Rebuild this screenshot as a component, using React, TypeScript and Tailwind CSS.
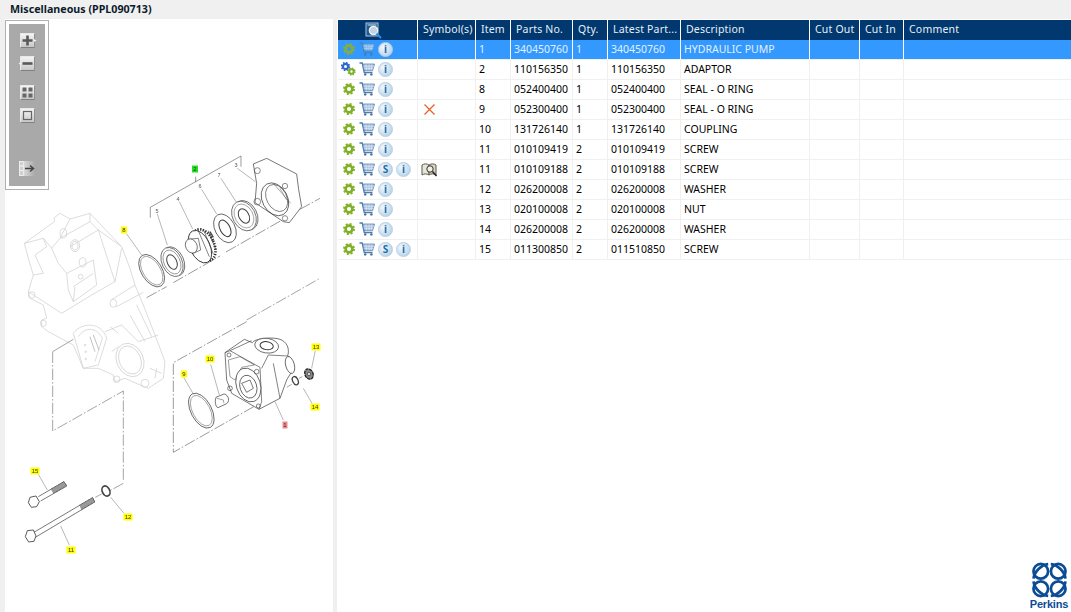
import type { ReactNode } from "react";

const font = { fontFamily: '"Noto Sans", "Liberation Sans", sans-serif' };

type Part = {
  item: string;
  partNo: string;
  qty: string;
  latest: string;
  description: string;
  extra?: boolean;
  symbol?: "x" | "book";
  gears?: boolean;
};

const parts: Part[] = [
  { item: "1", partNo: "340450760", qty: "1", latest: "340450760", description: "HYDRAULIC PUMP" },
  { item: "2", partNo: "110156350", qty: "1", latest: "110156350", description: "ADAPTOR", gears: true },
  { item: "8", partNo: "052400400", qty: "1", latest: "052400400", description: "SEAL - O RING" },
  { item: "9", partNo: "052300400", qty: "1", latest: "052300400", description: "SEAL - O RING", symbol: "x" },
  { item: "10", partNo: "131726140", qty: "1", latest: "131726140", description: "COUPLING" },
  { item: "11", partNo: "010109419", qty: "2", latest: "010109419", description: "SCREW" },
  { item: "11", partNo: "010109188", qty: "2", latest: "010109188", description: "SCREW", extra: true, symbol: "book" },
  { item: "12", partNo: "026200008", qty: "2", latest: "026200008", description: "WASHER" },
  { item: "13", partNo: "020100008", qty: "2", latest: "020100008", description: "NUT" },
  { item: "14", partNo: "026200008", qty: "2", latest: "026200008", description: "WASHER" },
  { item: "15", partNo: "011300850", qty: "2", latest: "011510850", description: "SCREW", extra: true },
];

const gridCols = "grid grid-cols-[80px_58px_35px_62px_35px_73px_129px_50px_44px_1fr]";

function Gear({ color = "#7fb026", size = 12 }: { color?: string; size?: number }) {
  return (
    <svg width={size} height={size} viewBox="0 0 12 12">
      <circle cx="6" cy="6" r="3.4" fill="none" stroke={color} strokeWidth="2.6" />
      <circle cx="6" cy="6" r="5" fill="none" stroke={color} strokeWidth="2" strokeDasharray="2 1.93" />
    </svg>
  );
}

function GearPair() {
  return (
    <svg width="15" height="14" viewBox="0 0 15 14">
      <circle cx="4.5" cy="4.5" r="2.6" fill="none" stroke="#2f66d0" strokeWidth="2.2" />
      <circle cx="4.5" cy="4.5" r="3.9" fill="none" stroke="#2f66d0" strokeWidth="1.6" strokeDasharray="1.6 1.46" />
      <circle cx="10.5" cy="9.5" r="2.2" fill="none" stroke="#7fb026" strokeWidth="2" />
      <circle cx="10.5" cy="9.5" r="3.4" fill="none" stroke="#7fb026" strokeWidth="1.5" strokeDasharray="1.4 1.27" />
    </svg>
  );
}

function Cart({ dim }: { dim?: boolean }) {
  return (
    <svg width="16" height="14" viewBox="0 0 16 14" className={dim ? "opacity-70" : ""}>
      <path d="M0.5 1H3.2L5.2 10.5H13.5" fill="none" stroke="#4f7cab" strokeWidth="1.3" />
      <path d="M3.8 2H15.5L13.6 8.6H5.2Z" fill="#a5bfdb" stroke="#5b86b3" strokeWidth="0.8" />
      <path d="M7 2.2L7.5 8.5M10 2.2V8.5M13 2.2L12.2 8.5M4.3 4.2H15M4.8 6.4H14.3" stroke="#e6eef6" strokeWidth="0.6" />
      <circle cx="6.2" cy="12.4" r="1.2" fill="#3d6c9e" />
      <circle cx="12.4" cy="12.4" r="1.2" fill="#3d6c9e" />
    </svg>
  );
}

function Badge({ children }: { children: ReactNode }) {
  return (
    <div className="flex h-[15px] w-[15px] items-center justify-center rounded-full border border-[#b5cfe3] bg-[radial-gradient(circle_at_35%_35%,#f3f8fc,#a9c9e2)] text-[10px] leading-none font-bold text-[#1f6ea8]">
      {children}
    </div>
  );
}

function RowIcons({ part, selected }: { part: Part; selected: boolean }) {
  return (
    <div className="flex h-full items-center pb-[1px]">
      <div className="flex w-[21px] justify-center">
        {part.gears ? <GearPair /> : <Gear color={selected ? "#86ad3c" : "#7fb026"} />}
      </div>
      <Cart dim={selected} />
      <div className="ml-[3px] flex gap-[3px]">
        {part.extra && <Badge>S</Badge>}
        <Badge>i</Badge>
      </div>
    </div>
  );
}

function HeaderIcon() {
  return (
    <svg width="17" height="17" viewBox="0 0 17 17">
      <rect x="1" y="1" width="12" height="13" fill="#1d5a94" stroke="#a9c6e0" />
      <path d="M2.5 3H11.5" stroke="#d6e4f0" />
      <circle cx="8.5" cy="8.5" r="4.2" fill="#c4d3df" stroke="#eef2f6" strokeWidth="1.2" />
      <path d="M11.5 11.5L16 16" stroke="#2f8fe0" strokeWidth="1.9" />
    </svg>
  );
}

function BookIcon() {
  return (
    <svg width="17" height="15" viewBox="0 0 17 15">
      <path d="M1 3C3 1.5 6 1.5 8 3V13C6 11.5 3 11.5 1 13Z" fill="#e8e6d6" stroke="#5a5a4a" />
      <path d="M8 3C10 1.5 13 1.5 15 3V13C13 11.5 10 11.5 8 13Z" fill="#d8d5c0" stroke="#5a5a4a" />
      <circle cx="9" cy="7" r="3.2" fill="#efefe6" stroke="#333" />
      <path d="M11.5 9.5L15.5 14" stroke="#222" strokeWidth="1.5" />
    </svg>
  );
}

function RedX() {
  return (
    <svg width="11" height="11" viewBox="0 0 11 11">
      <path d="M0.5 0.5L10.5 10.5M10.5 0.5L0.5 10.5" stroke="#e8622c" strokeWidth="1.3" />
    </svg>
  );
}

function ToolButton({ children }: { children: ReactNode }) {
  return (
    <div className="h-[15px] w-[15px] rounded-[1px] border border-t-[#e8e8e8] border-l-[#e8e8e8] border-r-[#909090] border-b-[#808080] bg-gradient-to-b from-[#f4f4f4] to-[#c8c8c8]">
      {children}
    </div>
  );
}

function Toolbar() {
  return (
    <div className="absolute top-[1px] left-0 h-[170px] w-[44px] border border-[#b0b0b0] bg-white p-[3px]">
      <div className="flex h-full w-full flex-col items-center bg-[#a9a9a9] pt-[9px]">
        <ToolButton>
          <svg viewBox="0 0 13 13" className="h-full w-full overflow-visible">
            <path d="M6.5 1.5V11.5M1.5 6.5H11.5" stroke="#595959" strokeWidth="2.6" />
            <path d="M13 5L15.5 6.5L13 8Z" fill="#f0f0f0" />
          </svg>
        </ToolButton>
        <div className="mt-[8px]">
          <ToolButton>
            <svg viewBox="0 0 13 13" className="h-full w-full overflow-visible">
              <path d="M1.5 6.5H11.5" stroke="#595959" strokeWidth="2.6" />
              <path d="M0 5L-2.5 6.5L0 8Z" fill="#f0f0f0" />
            </svg>
          </ToolButton>
        </div>
        <div className="mt-[14px]">
          <ToolButton>
            <svg viewBox="0 0 13 13" className="h-full w-full">
              <path d="M1.5 1.5h4v4h-4zM7.5 1.5h4v4h-4zM1.5 7.5h4v4h-4zM7.5 7.5h4v4h-4z" fill="#666" />
            </svg>
          </ToolButton>
        </div>
        <div className="mt-[8px]">
          <ToolButton>
            <svg viewBox="0 0 13 13" className="h-full w-full">
              <rect x="2.5" y="2.5" width="8" height="8" fill="none" stroke="#666" strokeWidth="1.2" />
            </svg>
          </ToolButton>
        </div>
        <div className="mt-[38px]">
          <div className="h-[15px] w-[16px] bg-gradient-to-r from-[#eeeeee] to-[#a9a9a9]">
            <svg viewBox="0 0 16 15" className="h-full w-full">
              <path d="M0.5 0.5h4v4.5h-4zM0.5 5h4v4.5h-4zM0.5 9.5h4v5h-4z" fill="#d0d0d0" stroke="#f4f4f4" strokeWidth="0.7" />
              <path d="M6 7.5H14M11 4.5L14.5 7.5L11 10.5" fill="none" stroke="#444" strokeWidth="1.5" />
            </svg>
          </div>
        </div>
      </div>
    </div>
  );
}

function Tag({ x, y, text, fill = "#ffff00", w = 9 }: { x: number; y: number; text: string; fill?: string; w?: number }) {
  return (
    <g>
      <rect x={x - w / 2} y={y - 3.5} width={w} height={7} fill={fill} />
      <text x={x} y={y + 2} textAnchor="middle" fontSize="6" fill="#333" fontFamily="Liberation Sans, sans-serif">
        {text}
      </text>
    </g>
  );
}

function Plain({ x, y, text }: { x: number; y: number; text: string }) {
  return (
    <text x={x} y={y + 2} textAnchor="middle" fontSize="5.5" fill="#555" fontFamily="Liberation Sans, sans-serif">
      {text}
    </text>
  );
}

function Diagram() {
  const gearbox = "translate(15 205) scale(0.3333)";
  const scale3 = "translate(20 150) scale(0.3333)";
  const scale4 = "translate(20 320) scale(0.3333)";
  const gearZone = "translate(130 200) scale(0.3333)";
  const pumpZone = "translate(215 330) scale(0.3333)";
  return (
    <svg viewBox="5 19 328 593" width="328" height="593" className="block blur-[0.3px]">
      {/* faded gearbox housing */}
      <g transform={gearbox} fill="none" stroke="#cfcfcf" strokeWidth="2.2">
        <path d="M28 115L118 50L118 38L135 25L165 42L225 25L320 125L345 190L360 240L385 300L420 390L450 470L445 520L400 550L375 540L330 520L300 530L295 510L250 490L205 490L175 420L100 380L80 365L80 345L95 340L85 300L45 280L40 260L55 210L40 160Z" />
        <path d="M40 260L140 325L230 270L300 230L320 130M28 115L85 100L110 130L135 100L165 42M85 100L95 125L60 150L85 205L55 210M110 130L130 175L155 205" />
        <path d="M155 205L235 165L245 240L175 290L160 255ZM175 245L235 205M175 290L180 245" />
        <path d="M135 100L225 50L250 75L165 125M225 25L225 50M250 75L320 125M250 75L290 200L300 230" />
        <circle cx="197" cy="215" r="7" />
        <ellipse cx="180" cy="122" rx="14" ry="18" />
        <ellipse cx="180" cy="122" rx="9" ry="13" />
        <ellipse cx="203" cy="172" rx="10" ry="14" />
        <ellipse cx="145" cy="85" rx="10" ry="14" />
        <ellipse cx="295" cy="295" rx="10" ry="12" />
        <path d="M290 284L360 240M303 306L385 262M320 360L370 410L430 390M345 330L390 410M365 300L410 395" />
        <path d="M175 385C200 350 260 350 275 400L250 480L205 490ZM190 395C210 365 245 365 262 400L240 470" />
        <path d="M225 395L240 440M235 390L252 435" stroke="#aaaaaa" />
        <circle cx="210" cy="420" r="2.5" />
        <circle cx="212" cy="440" r="2.5" />
        <circle cx="212" cy="462" r="2.5" />
        <ellipse cx="345" cy="465" rx="40" ry="52" transform="rotate(-25 345 465)" />
        <ellipse cx="345" cy="465" rx="32" ry="44" transform="rotate(-25 345 465)" />
        <path d="M290 440L310 425M270 380L320 360M285 365L310 385" />
        <circle cx="305" cy="523" r="10" />
        <circle cx="390" cy="535" r="12" />
        <circle cx="85" cy="355" r="9" />
        <circle cx="50" cy="270" r="10" />
        <path d="M405 490L440 505M420 520L425 490" />
      </g>

      <g transform={scale3} fill="none" stroke="#555" strokeWidth="2">
        <path d="M391 203V172L663 18V50M527 80V97" stroke="#666" />
        <path d="M380 443L440 410M460 398L600 318M618 306L790 208M840 178L900 145" stroke="#666" strokeDasharray="34 6 5 6" />
        <path d="M680 510L900 385" stroke="#777" strokeDasharray="34 6 5 6" />
        {/* leaders */}
        <path d="M320 252L365 315M412 192L442 285M478 155L518 237M545 118L590 192M603 85L650 158M652 55L706 95" stroke="#777" strokeWidth="1.6" />
        {/* ring 8 */}
        <ellipse cx="395" cy="362" rx="31" ry="54" transform="rotate(-32 395 362)" stroke="#333" strokeWidth="2" />
        <ellipse cx="395" cy="362" rx="26" ry="48" transform="rotate(-32 395 362)" stroke="#666" strokeWidth="1.6" />
      </g>

      {/* bearing 5, gear 4 */}
      <g transform={gearZone} fill="none" stroke="#555" strokeWidth="2">
        <ellipse cx="131" cy="184" rx="30" ry="46" transform="rotate(-25 131 184)" fill="#fff" stroke="#444" />
        <ellipse cx="126" cy="186" rx="30" ry="46" transform="rotate(-25 126 186)" fill="#fff" stroke="#444" />
        <ellipse cx="126" cy="186" rx="24" ry="38" transform="rotate(-25 126 186)" strokeWidth="1.6" />
        <ellipse cx="126" cy="186" rx="14" ry="23" transform="rotate(-25 126 186)" stroke="#444" strokeWidth="3" />
        <ellipse cx="222" cy="135" rx="30" ry="50" transform="rotate(-25 222 135)" fill="#fff" stroke="#2a2a2a" strokeWidth="8" strokeDasharray="4 4" />
        <ellipse cx="210" cy="140" rx="30" ry="52" transform="rotate(-25 210 140)" fill="#fff" stroke="#222" strokeWidth="2.4" />
        <path d="M205 92L238 170M220 88L250 162M235 92L258 150" stroke="#444" strokeWidth="2" />
        <path d="M172 118L205 115L212 150L190 160" fill="#fff" stroke="#444" />
        <ellipse cx="184" cy="138" rx="17" ry="22" transform="rotate(-25 184 138)" fill="#fff" stroke="#444" />
        <path d="M240 95L250 112" stroke="#444" strokeWidth="4" />
      </g>

      <g transform={scale3} fill="none" stroke="#555" strokeWidth="2">
        {/* seal 6 */}
        <ellipse cx="615" cy="235" rx="30" ry="46" transform="rotate(-28 615 235)" stroke="#333" />
        <ellipse cx="615" cy="235" rx="15" ry="27" transform="rotate(-28 615 235)" stroke="#333" strokeWidth="3" />
        {/* bearing 7 */}
        <ellipse cx="677" cy="196" rx="34" ry="47" transform="rotate(-28 677 196)" fill="#fff" stroke="#444" />
        <ellipse cx="672" cy="198" rx="34" ry="47" transform="rotate(-28 672 198)" fill="#fff" stroke="#444" />
        <ellipse cx="672" cy="198" rx="27" ry="38" transform="rotate(-28 672 198)" strokeWidth="1.4" />
        <ellipse cx="672" cy="198" rx="15" ry="23" transform="rotate(-28 672 198)" strokeWidth="3" stroke="#444" />
        {/* housing 3 */}
        <path d="M700 42L740 25L830 72L836 118L845 170L808 218L790 215L705 158L710 100Z" fill="#fff" stroke="#333" />
        <ellipse cx="765" cy="148" rx="38" ry="52" transform="rotate(-28 765 148)" stroke="#333" />
        <ellipse cx="770" cy="144" rx="30" ry="43" transform="rotate(-28 770 144)" />
        <path d="M760 100L812 160M780 115L800 150" strokeWidth="1.5" />
        <circle cx="712" cy="62" r="9" />
        <circle cx="795" cy="108" r="8" />
        <circle cx="712" cy="155" r="10" />
        <circle cx="795" cy="205" r="8" />
      </g>

      <g transform={scale4} fill="none" stroke="#555" strokeWidth="2">
        <path d="M98 95L160 58" stroke="#777" />
        <path d="M98 95V333L310 213V485M310 490L270 512M245 522L226 532" stroke="#777" strokeDasharray="34 6 5 6" />
        <path d="M680 5L460 128V397L710 255" stroke="#666" strokeDasharray="34 6 5 6" />
        {/* o-ring 9 */}
        <ellipse cx="544" cy="272" rx="31" ry="57" transform="rotate(-28 544 272)" stroke="#333" strokeWidth="2" />
        <ellipse cx="544" cy="272" rx="26" ry="50" transform="rotate(-28 544 272)" stroke="#666" strokeWidth="1.6" />
        {/* coupling 10 */}
        <path d="M588 232L612 222C628 224 630 248 618 252L594 263C586 262 584 240 588 232Z" fill="#fff" stroke="#333" />
        <path d="M590 235L610 240L612 250" stroke="#777" />
        {/* leaders */}
        <path d="M572 133L598 225M491 172L520 222M886 92L875 145M850 205L876 250M765 245L790 300" stroke="#777" strokeWidth="1.6" />
        {/* bolts */}
        <path d="M55 530L132 485L140 498L62 543" fill="#fff" stroke="#333" />
        <path d="M92 508L132 485L140 498L100 520" fill="#999" stroke="#333" strokeDasharray="3 2" />
        <path d="M30 532L48 528L58 545L50 560L34 562L25 548Z" fill="#fff" stroke="#333" strokeWidth="2.4" />
        <path d="M40 638L218 533L224 546L46 652" fill="#fff" stroke="#333" />
        <path d="M178 556L218 533L224 546L184 569" fill="#999" stroke="#333" strokeDasharray="3 2" />
        <path d="M22 632L40 630L48 648L42 664L26 666L16 650Z" fill="#fff" stroke="#333" strokeWidth="2.4" />
        <ellipse cx="258" cy="513" rx="11" ry="16" transform="rotate(-25 258 513)" strokeWidth="5" stroke="#444" />
        <path d="M55 463L82 510M122 618L148 675M272 532L312 580" stroke="#777" strokeWidth="1.6" />
      </g>

      {/* pump, washer 14, nut 13 */}
      <g transform={pumpZone} fill="none" stroke="#444" strokeWidth="2">
        <path d="M30 68L88 28L112 38C118 25 175 20 195 28C215 35 225 55 218 78C235 85 240 110 230 125L215 150L195 205L132 238L50 190L35 150Z" fill="#fff" stroke="#333" />
        <path d="M30 68L45 62L135 112L140 215L132 238M45 62L110 32M140 115L160 75L218 78M175 100L195 205" />
        <path d="M40 90L75 80L118 105L80 112L60 150L45 140Z" strokeWidth="1.6" />
        <ellipse cx="155" cy="47" rx="36" ry="22" transform="rotate(8 155 47)" fill="#fff" stroke="#333" />
        <ellipse cx="155" cy="47" rx="20" ry="12" transform="rotate(8 155 47)" stroke="#333" strokeWidth="3" />
        <ellipse cx="225" cy="105" rx="13" ry="26" transform="rotate(-15 225 105)" fill="#fff" stroke="#333" />
        <ellipse cx="100" cy="165" rx="36" ry="52" transform="rotate(-18 100 165)" fill="#fff" stroke="#333" />
        <ellipse cx="100" cy="170" rx="25" ry="35" transform="rotate(-18 100 170)" stroke="#333" />
        <path d="M80 160L105 150L115 175L95 187Z" stroke="#333" />
        <circle cx="42" cy="75" r="6" />
        <circle cx="125" cy="125" r="7" />
        <circle cx="45" cy="175" r="7" />
        <circle cx="130" cy="228" r="6" />
        <path d="M215 172L230 163M252 145L262 140" stroke="#777" />
        <ellipse cx="241" cy="152" rx="8" ry="13" transform="rotate(-25 241 152)" strokeWidth="4" stroke="#444" />
        <ellipse cx="282" cy="132" rx="12" ry="16" transform="rotate(-25 282 132)" fill="#888" stroke="#222" strokeWidth="4" strokeDasharray="10 2" />
        <circle cx="282" cy="132" r="5" fill="#ddd" stroke="#333" />
      </g>

      <Plain x={236} y={165} text="3" />
      <Plain x={219} y={175} text="7" />
      <Plain x={200} y={186} text="6" />
      <Plain x={178} y={199} text="4" />
      <Plain x={157} y={211} text="5" />
      <Tag x={195} y={169} text="2" fill="#22e022" w={6} />
      <Tag x={124} y={230} text="8" w={6} />
      <Tag x={35} y={471} text="15" />
      <Tag x={71} y={550} text="11" />
      <Tag x={128} y={517} text="12" />
      <Tag x={184} y={374} text="9" w={6} />
      <Tag x={210} y={359} text="10" />
      <Tag x={316} y={347} text="13" />
      <Tag x={315} y={407} text="14" />
      <Tag x={285} y={425} text="1" fill="#f08a8a" w={5} />
    </svg>
  );
}

function PerkinsLogo() {
  const knot = (
    <g fill="none" stroke="#0b4c96" strokeWidth="2.6">
      <circle cx="8.4" cy="8.4" r="7" />
      <path d="M1.5 15.5C2 9 9 2 15.5 1.5" />
    </g>
  );
  return (
    <div className="flex w-[40px] flex-col items-center">
      <svg width="35" height="36" viewBox="0 0 33.5 33.5">
        <g>{knot}</g>
        <g transform="translate(33.5 0) scale(-1 1)">{knot}</g>
        <g transform="translate(0 33.5) scale(1 -1)">{knot}</g>
        <g transform="translate(33.5 33.5) scale(-1 -1)">{knot}</g>
      </svg>
      <div className="text-[11px] leading-[12px] font-bold tracking-[-0.2px] text-[#0b4c96]" style={{ fontFamily: '"Liberation Sans", sans-serif' }}>
        Perkins
      </div>
    </div>
  );
}

const headers = ["Symbol(s)", "Item", "Parts No.", "Qty.", "Latest Part...", "Description", "Cut Out", "Cut In", "Comment"];

export default function App() {
  return (
    <div className="flex h-[612px] w-[1071px] flex-col overflow-hidden bg-[#f0f0f0] text-[10.5px]" style={font}>
      <div className="h-[19px] pt-[1px] pl-[10px] text-[10.7px] leading-[16px] font-bold text-[#0c1a2b]">
        Miscellaneous (PPL090713)
      </div>
      <div className="flex flex-1 pl-[5px]">
        <div className="relative w-[328px] bg-white">
          <Diagram />
          <Toolbar />
        </div>
        <div className="relative ml-[4px] flex-1 bg-white pl-[1px]">
          <div className={`${gridCols} mt-[1px] h-[20px] items-stretch bg-[#00386f] text-[#e8eef6]`}>
            <div className="flex items-center justify-center border-r border-white pr-[8px]">
              <HeaderIcon />
            </div>
            {headers.map((h) => (
              <div key={h} className="overflow-hidden border-r border-white pl-[5px] leading-[19px] tracking-[0.2px] whitespace-nowrap last:border-r-0">
                {h}
              </div>
            ))}
          </div>
          {parts.map((p, i) => {
            const selected = i === 0;
            const cell = selected
              ? "border-r border-b border-r-white border-b-[#f0f0f0] pl-[3px] leading-[18px] text-[#e4f0fc] overflow-hidden whitespace-nowrap"
              : "border-r border-b border-[#f0f0f0] pl-[3px] leading-[18px] text-black overflow-hidden whitespace-nowrap";
            return (
              <div key={i} className={`${gridCols} h-[20px] ${selected ? "bg-[#3399ff]" : "bg-white"}`}>
                <div className={selected ? "border-r border-b border-r-white border-b-[#f0f0f0]" : "border-r border-b border-[#f0f0f0]"}>
                  <RowIcons part={p} selected={selected} />
                </div>
                <div className={`${cell} flex items-center`}>
                  {p.symbol === "x" && (
                    <div className="ml-[3px]">
                      <RedX />
                    </div>
                  )}
                  {p.symbol === "book" && <BookIcon />}
                </div>
                <div className={cell}>{p.item}</div>
                <div className={cell}>{p.partNo}</div>
                <div className={cell}>{p.qty}</div>
                <div className={cell}>{p.latest}</div>
                <div className={cell}>{p.description}</div>
                <div className={cell} />
                <div className={cell} />
                <div className={`${cell} border-r-0`} />
              </div>
            );
          })}
          <div className="absolute right-[2px] bottom-[2px]">
            <PerkinsLogo />
          </div>
        </div>
      </div>
    </div>
  );
}
